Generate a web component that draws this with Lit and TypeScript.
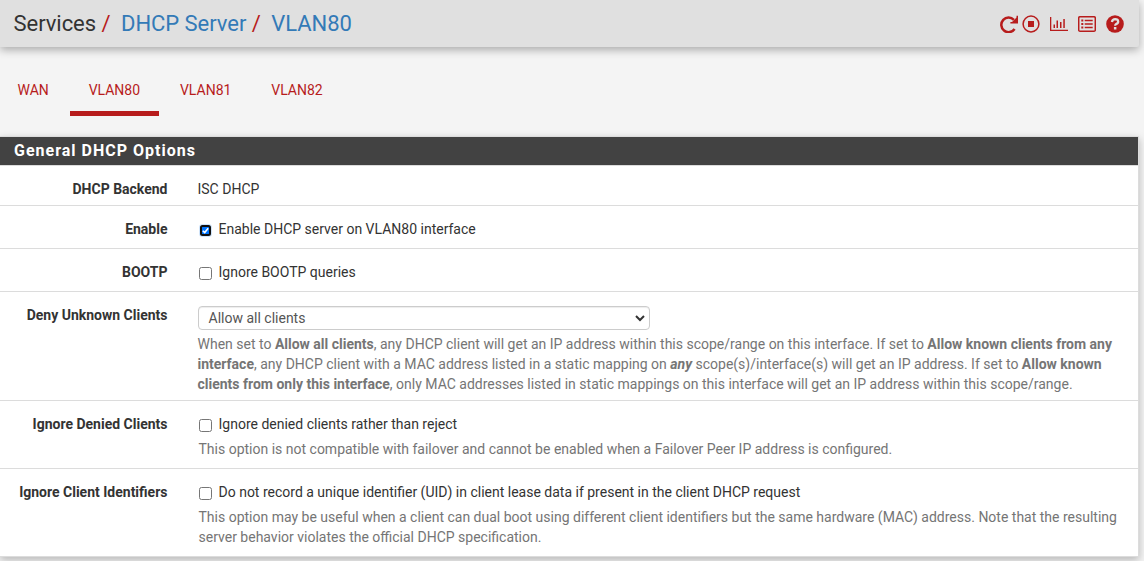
import { LitElement, html, css, svg } from "lit";
import { customElement } from "lit/decorators.js";

const glyphs: Record<string, any> = {
  restart: svg`<path d="M14.600 14A7.300 7.300 0 1 1 13.900 4.800" fill="none" stroke="currentColor" stroke-width="2.500"/><path d="M16.500 .8h1.500v7.600h-7.600v-1.500h1.600l4.500-4.500z"/>`,
  stop: svg`<circle cx="9" cy="9" r="7.900" fill="none" stroke="currentColor" stroke-width="1.500"/><rect x="6" y="6" width="6" height="6"/>`,
  chart: svg`<path d="M0 2h1.300v12.700H18V16H0zM3.500 9.500h1.500v3.500H3.500zM6.500 5.500h1.500v7.500H6.500zM10 7h1.500v6h-1.500zM13.300 4h1.500v9H13.300z"/>`,
  list: svg`<rect x=".7" y="1.700" width="16.600" height="14.600" rx="1.300" fill="none" stroke="currentColor" stroke-width="1.500"/><path d="M3.300 4.500h2v2h-2zM6.700 4.800h8v1.400h-8zM3.300 8h2v2h-2zM6.700 8.300h8v1.400h-8zM3.300 11.500h2v2h-2zM6.700 11.800h8v1.400h-8z"/>`,
  help: svg`<circle cx="9" cy="9" r="8.800"/><path d="M5.900 6.900Q6.500 4.200 9.100 4.200C13.200 4.400 12.700 8 10.400 8.800Q9.200 9.300 9.200 10.800" fill="none" stroke="#e0e0e0" stroke-width="2.300"/><rect x="7.900" y="12" width="2.500" height="2.500" fill="#e0e0e0"/>`,
};

@customElement("app-root")
export class AppRoot extends LitElement {
  static styles = css`
    * { box-sizing: border-box; }
    :host { display: block; height: 561px; overflow: hidden; background: #f4f4f4; color: #333; font: 14px/20px Roboto, sans-serif; }
    .top { width: 1139px; height: 47px; background: #e0e0e0; display: flex; justify-content: space-between; padding: 0 15.500px 0 13.500px; box-shadow: 0 3px 8px rgba(0,0,0,.3); border-radius: 0 0 2px 0; }
    .crumbs { display: flex; font-size: 22px; line-height: 47px; letter-spacing: -.05px; }
    .sep { color: #b71c1c; margin: 0 10.500px 0 5.500px; }
    .blue { color: #337ab7; }
    .icons { display: flex; align-items: center; color: #b71c1c; padding-top: 1px; }
    .icons svg { width: 18px; height: 18px; fill: currentColor; margin-left: 10px; display: block; }
    .icons svg:nth-child(2) { margin-left: 4px; }
    .tabs { display: flex; height: 89px; padding-top: 27px; color: #b71c1c; }
    .tab { height: 42px; padding: 6px 18.700px 0; margin-right: 2.500px; border-bottom: 5px solid transparent; }
    .tab:first-child { padding-left: 17.500px; }
    .tab.on { border-color: #b71c1c; }
    .panel { width: 1139px; border: 1px solid #dcdcdc; border-left: 0; background: #fff; box-shadow: 0 3px 8px rgba(0,0,0,.25); }
    .head { height: 28px; background: #424242; color: #fff; font-size: 16px; font-weight: 700; line-height: 27px; letter-spacing: 1px; padding-left: 14px; }
    .row { display: flex; border-top: 1px solid #dcdcdc; }
    .label { width: 167.500px; text-align: right; font-weight: 700; padding-top: 13px; flex: none; }
    .field { padding: 13px 0 0 30px; width: 930px; }
    .check { display: flex; align-items: center; gap: 6.500px; padding-left: 1.500px; }
    .box { width: 13px; height: 13px; border: 1px solid #767676; border-radius: 2.500px; margin-top: 2px; flex: none; }
    .box.on { border: 2px solid #101010; background: #0075ff; width: 11px; height: 11px; margin: 2px 1px 0; box-shadow: 0 0 0 1px #d0e4fa; }
    .box svg { display: block; width: 7px; height: 7px; }
    .help { color: #757575; padding-top: 5px; white-space: nowrap; }
    .check + .help { padding-left: 1px; }
    .select { width: 452px; height: 24px; border: 1px solid #ccc; border-radius: 4px; display: flex; justify-content: space-between; align-items: center; padding: 0 4px 0 9.500px; color: #555; margin: 1px 0 0 .5px; box-shadow: inset 0 1px 1px rgba(0,0,0,.075); }
    .select svg { width: 10px; height: 8px; }
    .select + .help { padding-top: 4px; }
    .h1 { height: 40px; } .h2 { height: 43px; } .h3 { height: 109px; } .h4 { height: 68px; } .h5 { height: 88px; }
  `;
  icon(n: string) { return html`<svg viewBox="0 0 18 18">${glyphs[n]}</svg>`; }
  row(size: string, label: string, body: unknown) {
    return html`<div class="row ${size}"><div class="label">${label}</div><div class="field">${body}</div></div>`;
  }
  check(text: string, on = false) {
    return html`<div class="check"><span class="box ${on ? "on" : ""}">${on ? html`<svg viewBox="0 0 7 7"><path d="M.8 3.700L2.700 5.600L6.200 1.200" fill="none" stroke="#fff" stroke-width="1.600"/></svg>` : ""}</span><span>${text}</span></div>`;
  }
  render() {
    return html`
      <header class="top"><div class="crumbs"><span>Services</span><span class="sep">/</span><span class="blue">DHCP Server</span><span class="sep">/</span><span class="blue">VLAN80</span></div>
        <div class="icons">${["restart", "stop", "chart", "list", "help"].map((n) => this.icon(n))}</div></header>
      <nav class="tabs">${["WAN", "VLAN80", "VLAN81", "VLAN82"].map((t) => html`<div class="tab ${t === "VLAN80" ? "on" : ""}">${t}</div>`)}</nav>
      <section class="panel"><div class="head">General DHCP Options</div>
        ${this.row("h1", "DHCP Backend", "ISC DHCP")}
        ${this.row("h2", "Enable", this.check("Enable DHCP server on VLAN80 interface", true))}
        ${this.row("h2", "BOOTP", this.check("Ignore BOOTP queries"))}
        ${this.row("h3", "Deny Unknown Clients", html`<div class="select"><span>Allow all clients</span><svg viewBox="0 0 10 8"><path d="M1 2l4 4l4-4" fill="none" stroke="#333" stroke-width="2"/></svg></div>
          <div class="help">When set to <b>Allow all clients</b>, any DHCP client will get an IP address within this scope/range on this interface. If set to <b>Allow known clients from any<br>interface</b>, any DHCP client with a MAC address listed in a static mapping on <b><i>any</i></b> scope(s)/interface(s) will get an IP address. If set to <b>Allow known<br>clients from only this interface</b>, only MAC addresses listed in static mappings on this interface will get an IP address within this scope/range.</div>`)}
        ${this.row("h4", "Ignore Denied Clients", html`${this.check("Ignore denied clients rather than reject")}<div class="help">This option is not compatible with failover and cannot be enabled when a Failover Peer IP address is configured.</div>`)}
        ${this.row("h5", "Ignore Client Identifiers", html`${this.check("Do not record a unique identifier (UID) in client lease data if present in the client DHCP request")}<div class="help">This option may be useful when a client can dual boot using different client identifiers but the same hardware (MAC) address. Note that the resulting<br>server behavior violates the official DHCP specification.</div>`)}
      </section>`;
  }
}
